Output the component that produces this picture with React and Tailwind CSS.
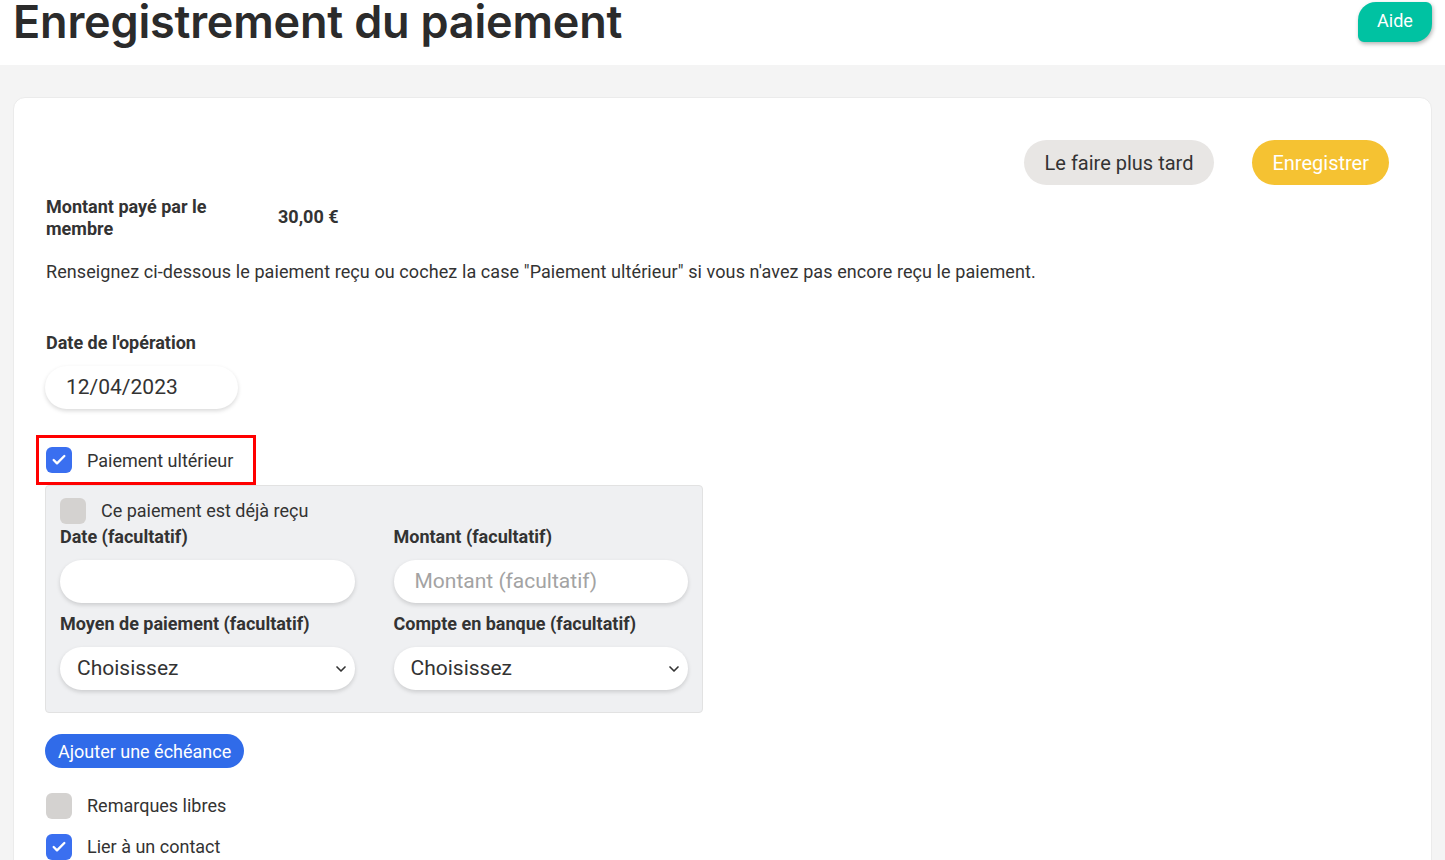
import { Check, ChevronDown } from 'lucide-react'

function Box({ checked }) {
  return checked ? (
    <span className="w-[26px] h-[26px] rounded-md bg-[#3a6ff0] flex items-center justify-center shrink-0">
      <Check size={16} strokeWidth={3.5} className="text-white" />
    </span>
  ) : (
    <span className="w-[26px] h-[26px] rounded-md bg-[#d4d2d0] shrink-0" />
  )
}

function Field({ label, children }) {
  return (
    <div className="flex flex-col">
      <div className="text-[18px] font-bold text-[#333] leading-[22px] mb-[12px]">{label}</div>
      {children}
    </div>
  )
}

function Pill({ children, muted }) {
  return (
    <div className={`h-[43px] w-full rounded-full bg-white shadow-[0_2px_4px_rgba(0,0,0,0.15)] flex items-center px-[21px] text-[21px] ${muted ? 'text-[#a3a3a3]' : 'text-[#333]'}`}>
      {children}
    </div>
  )
}

function Select() {
  return (
    <div className="h-[43px] w-full rounded-full bg-white shadow-[0_2px_4px_rgba(0,0,0,0.15)] flex items-center justify-between pl-[17px] pr-[6px] text-[21px] text-[#333]">
      <span>Choisissez</span>
      <ChevronDown size={16} strokeWidth={2.5} className="text-[#333]" />
    </div>
  )
}

export default function App() {
  return (
    <div className="min-h-screen bg-[#f4f4f4] font-['Roboto',sans-serif] text-[#333] overflow-hidden">
      <header className="h-[65px] bg-white flex items-start justify-between pl-[13px] pr-[13px] overflow-hidden">
        <h1 className="font-['Inter',sans-serif] font-semibold text-[45px] leading-none -mt-[1px] text-[#2b2b2b] tracking-[-0.2px]">
          Enregistrement du paiement
        </h1>
        <button className="mt-[2px] h-[40px] w-[74px] pb-[3px] bg-[#00c2a2] text-white text-[18px] rounded-tl-[18px] rounded-br-[18px] rounded-tr-[6px] rounded-bl-[6px] shadow-[1px_2px_4px_rgba(0,0,0,0.3)]">
          Aide
        </button>
      </header>

      <main className="px-[13px] pt-[32px]">
        <div className="bg-white rounded-[12px] border border-[#ebebeb] min-h-[800px] pl-[31px] pr-[42px] pt-[42px]">
          <div className="flex justify-end gap-[38px]">
            <button className="h-[45px] px-[21px] rounded-full bg-[#e8e6e4] text-[20px] text-[#333]">Le faire plus tard</button>
            <button className="h-[45px] px-[20px] rounded-full bg-[#f5c232] text-[20px] text-white">Enregistrer</button>
          </div>

          <div className="flex mt-[11px] pl-[1px]">
            <div className="w-[232px] shrink-0">
              <div className="w-[200px] text-[18px] font-bold leading-[22px]">Montant payé par le membre</div>
            </div>
            <div className="text-[18px] font-bold leading-[22px] pt-[10px]">30,00 €</div>
          </div>

          <p className="mt-[21px] pl-[1px] text-[18px] leading-[22px] tracking-[0.005em]">
            Renseignez ci-dessous le paiement reçu ou cochez la case "Paiement ultérieur" si vous n'avez pas encore reçu le paiement.
          </p>

          <div className="mt-[49px] pl-[1px] text-[18px] font-bold leading-[22px]">Date de l'opération</div>
          <div className="mt-[12px] w-[193px]">
            <Pill>12/04/2023</Pill>
          </div>

          <div className="mt-[26px] -ml-[9px] w-[220px] h-[50px] border-[3px] border-[#ff0000] flex items-center gap-[15px] pl-[7px]">
            <Box checked />
            <span className="text-[18px]">Paiement ultérieur</span>
          </div>

          <div className="w-[658px] bg-[#eff0f2] border border-[#e2e2e2] rounded-[4px] px-[14px] pt-[11px] pb-[22px]">
            <div className="flex items-center gap-[15px]">
              <Box />
              <span className="text-[18px]">Ce paiement est déjà reçu</span>
            </div>
            <div className="grid grid-cols-2 gap-x-[39px] gap-y-[10px] mt-[2px]">
              <Field label="Date (facultatif)"><Pill /></Field>
              <Field label="Montant (facultatif)"><Pill muted>Montant (facultatif)</Pill></Field>
              <Field label="Moyen de paiement (facultatif)"><Select /></Field>
              <Field label="Compte en banque (facultatif)"><Select /></Field>
            </div>
          </div>

          <button className="mt-[21px] h-[34px] px-[13px] rounded-full bg-[#306be9] text-white text-[18px]">Ajouter une échéance</button>

          <div className="mt-[24px] pl-[1px] flex items-center gap-[15px]">
            <Box />
            <span className="text-[18px]">Remarques libres</span>
          </div>
          <div className="mt-[14px] pl-[1px] flex items-center gap-[15px]">
            <Box checked />
            <span className="text-[18px]">Lier à un contact</span>
          </div>
        </div>
      </main>
    </div>
  )
}
